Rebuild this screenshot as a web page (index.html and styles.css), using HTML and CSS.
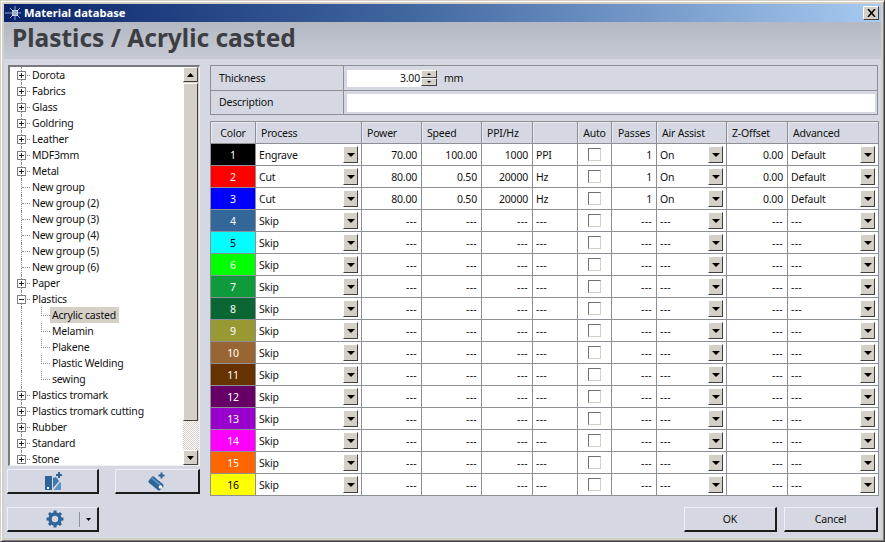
FILE: index.html
```html
<!DOCTYPE html>
<html lang="en">
<head>
<meta charset="utf-8">
<title>Material database</title>
<link rel="stylesheet" href="styles.css">
</head>
<body>
<div class="frame">
<div class="window">
  <div class="titlebar">
    <svg class="appicon" width="18" height="14" viewBox="0 0 18 14"><path d="M1 7h16M11 0v14M6 2l10 10M16 2L6 12" stroke="#8fa8d0" stroke-width="1"/><rect x="8" y="4" width="6" height="6" fill="#f2f5fa"/><path d="M8 6h6M8 8h6M10 4v6M12 4v6" stroke="#6f8ab5" stroke-width="0.800"/></svg>
    <span class="title">Material database</span>
    <span class="close"><svg width="9" height="8" viewBox="0 0 9 8"><path d="M1 0l7 8M8 0L1 8" stroke="#000" stroke-width="1.500"/></svg></span>
  </div>
  <div class="header">Plastics / Acrylic casted</div>
  <div class="main">
    <div class="left">
      <div class="treebox">
        <div class="tree">
          <div class="node"><i class="box plus"></i>Dorota</div>
          <div class="node"><i class="box plus"></i>Fabrics</div>
          <div class="node"><i class="box plus"></i>Glass</div>
          <div class="node"><i class="box plus"></i>Goldring</div>
          <div class="node"><i class="box plus"></i>Leather</div>
          <div class="node"><i class="box plus"></i>MDF3mm</div>
          <div class="node"><i class="box plus"></i>Metal</div>
          <div class="node"><i class="nobox"></i>New group</div>
          <div class="node"><i class="nobox"></i>New group (2)</div>
          <div class="node"><i class="nobox"></i>New group (3)</div>
          <div class="node"><i class="nobox"></i>New group (4)</div>
          <div class="node"><i class="nobox"></i>New group (5)</div>
          <div class="node"><i class="nobox"></i>New group (6)</div>
          <div class="node"><i class="box plus"></i>Paper</div>
          <div class="node"><i class="box"></i>Plastics</div>
          <div class="node sub"><i class="elbow"></i><span class="sel">Acrylic casted</span></div>
          <div class="node sub"><i class="elbow"></i><span class="lab">Melamin</span></div>
          <div class="node sub"><i class="elbow"></i><span class="lab">Plakene</span></div>
          <div class="node sub"><i class="elbow"></i><span class="lab">Plastic Welding</span></div>
          <div class="node sub last"><i class="elbow"></i><span class="lab">sewing</span></div>
          <div class="node"><i class="box plus"></i>Plastics tromark</div>
          <div class="node"><i class="box plus"></i>Plastics tromark cutting</div>
          <div class="node"><i class="box plus"></i>Rubber</div>
          <div class="node"><i class="box plus"></i>Standard</div>
          <div class="node end"><i class="box plus"></i>Stone</div>
        </div>
        <div class="scrollbar">
          <span class="sbtn"><svg width="7" height="4" viewBox="0 0 7 4"><path d="M3.500 0L7 4H0z"/></svg></span>
          <span class="thumb"></span>
          <span class="track"></span>
          <span class="sbtn"><svg width="7" height="4" viewBox="0 0 7 4"><path d="M0 0h7L3.500 4z"/></svg></span>
        </div>
      </div>
      <div class="treebtns">
        <button class="btn tb1"><svg width="18" height="18" viewBox="0 0 18 18"><path d="M1 4h7v14H1z" fill="#2f6499"/><path d="M9 6l3-1 3 4-6 7z" fill="#3f78ad"/><path d="M9.500 18L16 10l1 1v7z" fill="#5c93c4"/><rect x="3" y="15" width="2" height="2" fill="#fff"/><path d="M15 0v6M12 3h6" stroke="#2f6499" stroke-width="2"/></svg></button>
        <button class="btn tb2"><svg width="18" height="19" viewBox="0 0 18 19"><rect x="0.500" y="7.500" width="15" height="8" rx="2" fill="#2f6499" transform="rotate(40 8 11.500)"/><path d="M3 6.500l9 7.500 1-1.500-9-7.500z" fill="#5c93c4"/><circle cx="12.500" cy="15" r="1.800" fill="#fff"/><path d="M13.500 0.500v6M10.500 3.500h6" stroke="#2f6499" stroke-width="2"/></svg></button>
      </div>
    </div>
    <div class="right">
      <div class="props">
        <div class="prop">
          <div class="plabel thick">Thickness</div>
          <div class="pvalue">
            <span class="spininput">3.00</span>
            <span class="spin"><i class="sup"></i><i class="sdn"></i></span>
            <span class="unit">mm</span>
          </div>
        </div>
        <div class="prop">
          <div class="plabel">Description</div>
          <div class="pvalue"><span class="desc"></span></div>
        </div>
      </div>
      <table class="grid">
        <colgroup>
          <col class="w1"><col class="w2"><col class="w3"><col class="w3"><col class="w4"><col class="w5"><col class="w6"><col class="w5"><col class="w7"><col class="w8"><col class="w9">
        </colgroup>
        <thead>
          <tr><th class="ctr">Color</th><th>Process</th><th>Power</th><th>Speed</th><th>PPI/Hz</th><th></th><th class="ctr">Auto</th><th class="ctr">Passes</th><th>Air Assist</th><th>Z-Offset</th><th>Advanced</th></tr>
        </thead>
        <tbody>
          <tr><td class="col c1">1</td><td class="dd">Engrave<b></b></td><td class="n">70.00</td><td class="n">100.00</td><td class="n">1000</td><td>PPI</td><td class="ck"><u></u></td><td class="n">1</td><td class="dd">On<b></b></td><td class="n">0.00</td><td class="dd">Default<b></b></td></tr>
          <tr><td class="col c2">2</td><td class="dd">Cut<b></b></td><td class="n">80.00</td><td class="n">0.50</td><td class="n">20000</td><td>Hz</td><td class="ck"><u></u></td><td class="n">1</td><td class="dd">On<b></b></td><td class="n">0.00</td><td class="dd">Default<b></b></td></tr>
          <tr><td class="col c3">3</td><td class="dd">Cut<b></b></td><td class="n">80.00</td><td class="n">0.50</td><td class="n">20000</td><td>Hz</td><td class="ck"><u></u></td><td class="n">1</td><td class="dd">On<b></b></td><td class="n">0.00</td><td class="dd">Default<b></b></td></tr>
          <tr class="off"><td class="col c4">4</td><td class="dd">Skip<b></b></td><td class="n">---</td><td class="n">---</td><td class="n">---</td><td>---</td><td class="ck"><u></u></td><td class="n">---</td><td class="dd">---<b></b></td><td class="n">---</td><td class="dd">---<b></b></td></tr>
          <tr class="off"><td class="col c5">5</td><td class="dd">Skip<b></b></td><td class="n">---</td><td class="n">---</td><td class="n">---</td><td>---</td><td class="ck"><u></u></td><td class="n">---</td><td class="dd">---<b></b></td><td class="n">---</td><td class="dd">---<b></b></td></tr>
          <tr class="off"><td class="col c6">6</td><td class="dd">Skip<b></b></td><td class="n">---</td><td class="n">---</td><td class="n">---</td><td>---</td><td class="ck"><u></u></td><td class="n">---</td><td class="dd">---<b></b></td><td class="n">---</td><td class="dd">---<b></b></td></tr>
          <tr class="off"><td class="col c7">7</td><td class="dd">Skip<b></b></td><td class="n">---</td><td class="n">---</td><td class="n">---</td><td>---</td><td class="ck"><u></u></td><td class="n">---</td><td class="dd">---<b></b></td><td class="n">---</td><td class="dd">---<b></b></td></tr>
          <tr class="off"><td class="col c8">8</td><td class="dd">Skip<b></b></td><td class="n">---</td><td class="n">---</td><td class="n">---</td><td>---</td><td class="ck"><u></u></td><td class="n">---</td><td class="dd">---<b></b></td><td class="n">---</td><td class="dd">---<b></b></td></tr>
          <tr class="off"><td class="col c9">9</td><td class="dd">Skip<b></b></td><td class="n">---</td><td class="n">---</td><td class="n">---</td><td>---</td><td class="ck"><u></u></td><td class="n">---</td><td class="dd">---<b></b></td><td class="n">---</td><td class="dd">---<b></b></td></tr>
          <tr class="off"><td class="col c10">10</td><td class="dd">Skip<b></b></td><td class="n">---</td><td class="n">---</td><td class="n">---</td><td>---</td><td class="ck"><u></u></td><td class="n">---</td><td class="dd">---<b></b></td><td class="n">---</td><td class="dd">---<b></b></td></tr>
          <tr class="off"><td class="col c11">11</td><td class="dd">Skip<b></b></td><td class="n">---</td><td class="n">---</td><td class="n">---</td><td>---</td><td class="ck"><u></u></td><td class="n">---</td><td class="dd">---<b></b></td><td class="n">---</td><td class="dd">---<b></b></td></tr>
          <tr class="off"><td class="col c12">12</td><td class="dd">Skip<b></b></td><td class="n">---</td><td class="n">---</td><td class="n">---</td><td>---</td><td class="ck"><u></u></td><td class="n">---</td><td class="dd">---<b></b></td><td class="n">---</td><td class="dd">---<b></b></td></tr>
          <tr class="off"><td class="col c13">13</td><td class="dd">Skip<b></b></td><td class="n">---</td><td class="n">---</td><td class="n">---</td><td>---</td><td class="ck"><u></u></td><td class="n">---</td><td class="dd">---<b></b></td><td class="n">---</td><td class="dd">---<b></b></td></tr>
          <tr class="off"><td class="col c14">14</td><td class="dd">Skip<b></b></td><td class="n">---</td><td class="n">---</td><td class="n">---</td><td>---</td><td class="ck"><u></u></td><td class="n">---</td><td class="dd">---<b></b></td><td class="n">---</td><td class="dd">---<b></b></td></tr>
          <tr class="off"><td class="col c15">15</td><td class="dd">Skip<b></b></td><td class="n">---</td><td class="n">---</td><td class="n">---</td><td>---</td><td class="ck"><u></u></td><td class="n">---</td><td class="dd">---<b></b></td><td class="n">---</td><td class="dd">---<b></b></td></tr>
          <tr class="off"><td class="col c16">16</td><td class="dd">Skip<b></b></td><td class="n">---</td><td class="n">---</td><td class="n">---</td><td>---</td><td class="ck"><u></u></td><td class="n">---</td><td class="dd">---<b></b></td><td class="n">---</td><td class="dd">---<b></b></td></tr>
        </tbody>
      </table>
    </div>
  </div>
  <div class="footer">
    <button class="btn settings">
      <svg class="gear" width="18" height="18" viewBox="0 0 18 18"><circle cx="9" cy="9" r="5" fill="none" stroke="#2f6499" stroke-width="3.600"/><path d="M9 0.500v3M9 14.500v3M0.500 9h3M14.500 9h3M3 3l2 2M13 13l2 2M15 3l-2 2M5 13l-2 2" stroke="#2f6499" stroke-width="3"/></svg>
      <span class="sep"></span>
      <svg class="arrow" width="5" height="3" viewBox="0 0 5 3"><path d="M0 0h5L2.500 3z"/></svg>
    </button>
    <div class="actions">
      <button class="btn action">OK</button>
      <button class="btn action">Cancel</button>
    </div>
  </div>
</div>
</div>
</body>
</html>
```
FILE: styles.css
```css
* { box-sizing: border-box; }
html, body { margin: 0; padding: 0; }
body {
  width: 885px;
  height: 542px;
  overflow: hidden;
  font-family: "Noto Sans", "DejaVu Sans", sans-serif;
  font-size: 10.5px;
  letter-spacing: -0.2px;
  color: #111;
}
.frame {
  width: 885px;
  height: 542px;
  padding: 3px;
  background: #d4d0c8;
  border: 1px solid;
  border-color: #d4d0c8 #404040 #404040 #d4d0c8;
  box-shadow: inset 1px 1px 0 #fff, inset -1px -1px 0 #808080;
}
.window {
  height: 100%;
  display: flex;
  flex-direction: column;
  background: #d5d8e3;
}
.titlebar {
  height: 18px;
  flex: none;
  display: flex;
  align-items: center;
  color: #fff;
  background: linear-gradient(90deg, #0a246a 0%, #3f659f 45%, #a6caf0 100%);
  padding-right: 2px;
}
.appicon { flex: none; margin-right: 2px; margin-top: -1px; }
.title { font-weight: 700; font-size: 11.2px; letter-spacing: 0; flex: 1; margin-top: -2px; }
.close {
  width: 16px;
  height: 14px;
  display: flex;
  align-items: center;
  justify-content: center;
  background: #d4d0c8;
  border: 1px solid;
  border-color: #fff #404040 #404040 #fff;
}
.header {
  height: 37px;
  flex: none;
  padding-left: 8px;
  font-weight: 700;
  font-size: 24.5px;
  letter-spacing: 0;
  line-height: 32px;
  color: #3c3e43;
  background: linear-gradient(180deg, #b3b8c3 0%, #c6cad4 100%);
}
.main {
  flex: none;
  display: flex;
  padding: 6px 3px 0 3px;
  height: 440px;
}
.left { width: 193px; flex: none; padding-left: 1px; }
.treebox {
  height: 401px;
  display: flex;
  background: #fff;
  border: 1px solid;
  border-width: 2px 1px 1px 2px;
  border-color: #7a7a7a #f2f2f2 #f2f2f2 #7a7a7a;
}
.tree { flex: 1; }
.node {
  height: 16px;
  line-height: 16px;
  padding-left: 22px;
  position: relative;
  white-space: nowrap;
}
.node.end { height: 14px; }
.node::before {
  content: "";
  position: absolute;
  left: 11px;
  top: 0;
  bottom: 0;
  border-left: 1px dotted #8a8a8a;
}
.node.end::before { bottom: 6px; }
.box {
  position: absolute;
  left: 7px;
  top: 4px;
  width: 9px;
  height: 9px;
  background: linear-gradient(#222, #222) center / 5px 1px no-repeat, #fff;
  border: 1px solid #808080;
  z-index: 1;
}
.box.plus { background: linear-gradient(#222, #222) center / 5px 1px no-repeat, linear-gradient(#222, #222) center / 1px 5px no-repeat, #fff; }
.box::after {
  content: "";
  position: absolute;
  left: 7px;
  top: 3px;
  width: 5px;
  border-top: 1px dotted #8a8a8a;
}
.nobox {
  position: absolute;
  left: 12px;
  top: 8px;
  width: 8px;
  border-top: 1px dotted #8a8a8a;
}
.node.sub { padding-left: 42px; }
.elbow {
  position: absolute;
  left: 31px;
  top: 0;
  bottom: 7px;
  width: 9px;
  border-left: 1px dotted #8a8a8a;
  border-bottom: 1px dotted #8a8a8a;
}
.sel { display: inline-block; background: #d4d0c8; margin-left: -2px; padding: 0 3px 0 2px; height: 16px; }
.scrollbar {
  width: 16px;
  flex: none;
  display: flex;
  flex-direction: column;
  background: #d4d0c8;
}
.sbtn {
  width: 15px;
  height: 15px;
  flex: none;
  display: flex;
  align-items: center;
  justify-content: center;
  background: #d4d0c8;
  border: 1px solid;
  border-color: #fff #404040 #404040 #fff;
}
.thumb {
  height: 338px;
  width: 15px;
  margin-top: 1px;
  flex: none;
  background: #d4d0c8;
  border: 1px solid;
  border-color: #fff #404040 #404040 #fff;
}
.track {
  flex: 1;
  background: repeating-conic-gradient(#fff 0 25%, #d4d0c8 0 50%) 0 0 / 2px 2px;
}
.treebtns {
  display: flex;
  justify-content: space-between;
  padding: 3px 0 0 0;
  margin-left: -1px;
  gap: 16px;
}
.btn {
  display: flex;
  align-items: center;
  justify-content: center;
  padding: 0;
  font: inherit;
  letter-spacing: inherit;
  color: #111;
  background: #d5d8e3;
  border: 1px solid;
  border-width: 1px 2px 2px 1px;
  border-color: #eef0f5 #1c1c1c #1c1c1c #eef0f5;
}
.tb1 { width: 92px; height: 25px; }
.tb2 { width: 85px; height: 25px; }
.right { margin-left: 10px; width: 668px; flex: none; }
.props {
  height: 50px;
  border: 1px solid #8c8f93;
}
.prop { display: flex; height: 24px; }
.prop + .prop { border-top: 1px solid #8c8f93; height: 24px; }
.plabel {
  width: 133px;
  flex: none;
  padding-left: 8px;
  line-height: 23px;
  border-right: 1px solid #8c8f93;
}
.plabel.thick { line-height: 25px; }
.pvalue { flex: 1; display: flex; align-items: center; padding-left: 3px; }
.spininput {
  width: 74px;
  height: 17px;
  line-height: 16px;
  text-align: right;
  background: #fff;
  padding-right: 1px;
}
.spin { width: 16px; height: 16px; display: flex; flex-direction: column; }
.spin i {
  flex: 1;
  background: #d4d0c8;
  border: 1px solid;
  border-color: #fff #404040 #404040 #fff;
  position: relative;
}
.spin i::after {
  content: "";
  position: absolute;
  left: 5px;
  top: 2px;
  border-left: 2px solid transparent;
  border-right: 2px solid transparent;
}
.sup::after { border-bottom: 2px solid #000; }
.sdn::after { border-top: 2px solid #000; }
.unit { margin-left: 7px; }
.desc { display: block; width: 528px; height: 18px; background: #fff; margin-top: 1px; }
.grid {
  margin-top: 6px;
  width: 668px;
  table-layout: fixed;
  border-collapse: collapse;
  border: 1px solid #8c8f93;
}
.w1 { width: 45px; } .w2 { width: 106px; } .w3 { width: 60px; } .w4 { width: 51px; }
.w5 { width: 45px; } .w6 { width: 34px; } .w7 { width: 70px; } .w8 { width: 61px; } .w9 { width: 91px; }
.grid th {
  height: 22px;
  padding: 1px 0 0 5px;
  font-weight: 400;
  text-align: left;
  white-space: nowrap;
  border: 1px solid #8c8f93;
  box-shadow: inset 1px 1px 0 #e8eaf0;
}
.grid th.ctr { text-align: center; padding: 1px 0 0 0; }
.grid td {
  height: 22px;
  padding: 0 3px;
  background: #fff;
  border: 1px solid #8c8f93;
  white-space: nowrap;
  position: relative;
}
.grid .off td { letter-spacing: 0.3px; }
.grid .off td.dd:nth-child(2) { letter-spacing: -0.2px; }
.grid td.n { text-align: right; padding-right: 4px; }
.grid td.col { text-align: center; color: #fff; letter-spacing: -0.2px; }
.grid td.dd b {
  position: absolute;
  right: 3px;
  top: 2px;
  width: 15px;
  height: 17px;
  background: #d4d0c8;
  border: 1px solid;
  border-color: #fff #404040 #404040 #fff;
}
.grid td.dd b::after {
  content: "";
  position: absolute;
  left: 3px;
  top: 6px;
  border-left: 4px solid transparent;
  border-right: 4px solid transparent;
  border-top: 4px solid #000;
}
.grid td.ck { text-align: center; padding: 0; line-height: 0; }
.ck u {
  display: inline-block;
  width: 13px;
  height: 13px;
  background: #fff;
  border: 1px solid;
  border-color: #707070 #d4d0c8 #d4d0c8 #707070;
}
.grid td.c1 { background: #000; }
.grid td.c2 { background: #ff0000; }
.grid td.c3 { background: #0000ff; }
.grid td.c4 { background: #336699; }
.grid td.c5 { background: #00ffff; color: #000; }
.grid td.c6 { background: #00ff00; }
.grid td.c7 { background: #0f9a3c; }
.grid td.c8 { background: #0a6633; }
.grid td.c9 { background: #999933; }
.grid td.c10 { background: #996633; }
.grid td.c11 { background: #663300; }
.grid td.c12 { background: #660066; }
.grid td.c13 { background: #9900cc; }
.grid td.c14 { background: #ff00ff; }
.grid td.c15 { background: #ff6600; }
.grid td.c16 { background: #ffff00; color: #000; }
.footer {
  flex: 1;
  display: flex;
  justify-content: space-between;
  align-items: flex-start;
  padding: 8px 3px 0 3px;
}
.settings { width: 92px; height: 25px; padding-left: 38px; justify-content: flex-start; }
.sep { width: 1px; height: 15px; margin-left: 15px; background: #8f929a; }
.arrow { margin-left: 6px; }
.actions { display: flex; gap: 7px; }
.action { width: 93px; height: 25px; }
.action + .action { width: 94px; }
```
